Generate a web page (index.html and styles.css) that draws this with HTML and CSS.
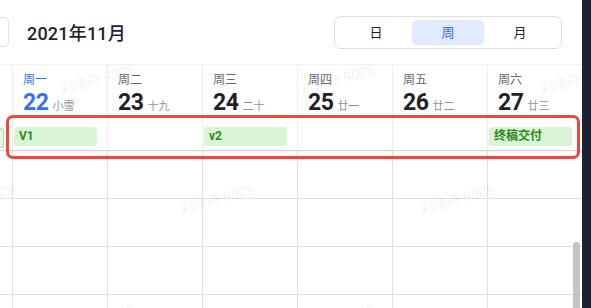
FILE: index.html
```html
<!DOCTYPE html>
<html lang="zh-CN">
<head>
  <meta charset="UTF-8" />
  <meta name="viewport" content="width=device-width, initial-scale=1.0"/>
  <title>日历</title>
  <link rel="stylesheet" href="styles.css">
</head>
<body>

  <div class="app">
    <div class="toolbar">
      <div class="nav-stub"></div>
      <div class="month-title">2021年11月</div>
      <div class="view-switch">
        <div class="view-btn">日</div>
        <div class="view-btn active">周</div>
        <div class="view-btn">月</div>
      </div>
    </div>

    <div class="calendar">
      <div class="head-row" id="head-row"></div>
      <div class="allday-row" id="allday-row"></div>
      <div class="grid-row" id="grid-rows"></div>
    </div>

    <div class="highlight"></div>
    <div class="scrollbar"></div>
    <div class="watermarks" id="watermarks"></div>
  </div>

  <script>
    const days = [
      { name: "周一", date: 22, lunar: "小雪", today: true, event: "V1" },
      { name: "周二", date: 23, lunar: "十九" },
      { name: "周三", date: 24, lunar: "二十", event: "v2" },
      { name: "周四", date: 25, lunar: "廿一" },
      { name: "周五", date: 26, lunar: "廿二" },
      { name: "周六", date: 27, lunar: "廿三", event: "终稿交付" }
    ];

    const headRow = document.getElementById("head-row");
    const alldayRow = document.getElementById("allday-row");
    const gridRows = document.getElementById("grid-rows");

    // partial column from the previous day
    headRow.innerHTML = `<div class="cell cell-edge"></div>`;
    alldayRow.innerHTML = `<div class="cell cell-edge"><div class="chip-stub"></div></div>`;

    days.forEach(d => {
      headRow.innerHTML += `
        <div class="cell head-cell ${d.today ? "today" : ""}">
          <div class="day-name">${d.name}</div>
          <div class="day-date">${d.date}<span class="lunar">${d.lunar}</span></div>
        </div>`;
      alldayRow.innerHTML += `
        <div class="cell allday-cell">
          ${d.event ? `<div class="chip">${d.event}</div>` : ""}
        </div>`;
    });

    let rows = "";
    for (let r = 0; r < 4; r++) {
      rows += `<div class="cell cell-edge slot"></div>`;
      days.forEach(() => rows += `<div class="cell slot"></div>`);
    }
    gridRows.innerHTML = rows;

    // watermark lattice
    const wm = document.getElementById("watermarks");
    const spots = [
      [98, 78], [338, 78], [578, 78],
      [-22, 198], [218, 198], [458, 198],
      [98, 318], [338, 318]
    ];
    spots.forEach(([x, y]) => {
      const s = document.createElement("span");
      s.className = "wm";
      s.textContent = "刘晓舟 9008";
      s.style.left = (x - 40) + "px";
      s.style.top = (y - 10) + "px";
      wm.appendChild(s);
    });
  </script>

</body>
</html>
```

FILE: styles.css
```css
body {
  margin: 0;
  height: 308px;
  overflow: hidden;
  background: #1a2234;
  font-family: Roboto, "Noto Sans CJK SC", sans-serif;
  color: #1f2329;
}

.app {
  position: relative;
  width: 582px;
  height: 308px;
  background: #fff;
  overflow: hidden;
}

.toolbar {
  height: 64px;
  display: flex;
  align-items: center;
}

.nav-stub {
  width: 40px;
  height: 30px;
  margin-left: -31px;
  border: 1px solid #dee0e3;
  border-radius: 6px;
  box-sizing: border-box;
}

.month-title {
  margin-left: 18px;
  font-size: 18px;
  font-weight: 500;
  letter-spacing: 0.2px;
}

.view-switch {
  margin-left: auto;
  margin-right: 20px;
  display: flex;
  padding: 3px 5px;
  border: 1px solid #dee0e3;
  border-radius: 7px;
  margin-top: 1px;
}

.view-btn {
  width: 72px;
  height: 25px;
  line-height: 25px;
  text-align: center;
  font-size: 13px;
  border-radius: 5px;
}

.view-btn.active {
  background: #e1eaff;
  color: #3370ff;
}

.calendar {
  border-top: 1px solid #eff0f1;
}

.head-row,
.allday-row,
.grid-row {
  display: grid;
  grid-template-columns: 12px repeat(6, 95px);
}

.cell {
  border-left: 1px solid #eceded;
  box-sizing: border-box;
}

.cell-edge {
  border-left: none;
}

.head-row {
  height: 55px;
}

.head-cell {
  padding: 5px 0 0 10px;
}

.day-name {
  font-size: 12px;
  line-height: 20px;
  color: #646a73;
}

.day-date {
  font-size: 23px;
  font-weight: 700;
  line-height: 26px;
  letter-spacing: -0.5px;
  color: #1f2329;
}

.lunar {
  font-size: 11px;
  font-weight: 400;
  letter-spacing: 0;
  color: #8f959e;
  margin-left: 4px;
}

.today .day-name,
.today .day-date {
  color: #3370ff;
}

.allday-row {
  height: 30px;
  border-bottom: 1px solid #d3d4d6;
  box-shadow: 0 1px 2px rgba(0, 0, 0, 0.06);
}

.allday-cell {
  padding: 7px 10px 0 1px;
}

.chip {
  height: 19px;
  line-height: 19px;
  padding-left: 5px;
  background: #d9f5d6;
  border-radius: 3px;
  color: #2c8a1c;
  font-size: 12px;
  font-weight: 700;
}

.chip-stub {
  width: 3px;
  height: 18px;
  margin-top: 8px;
  background: #e4f6e1;
  border: 1px solid #a9d8a3;
  border-left: none;
  border-radius: 0 3px 3px 0;
}

.slot {
  height: 48px;
  border-left-color: #dee0e3;
  border-bottom: 1px solid #dee0e3;
}

.slot.cell-edge {
  border-left: none;
}

.highlight {
  position: absolute;
  left: 6px;
  top: 115px;
  width: 574px;
  height: 44px;
  box-sizing: border-box;
  border: 3px solid #f2453d;
  border-radius: 7px;
}

.scrollbar {
  position: absolute;
  left: 573px;
  top: 242px;
  width: 7px;
  height: 90px;
  background: #c4c4c4;
  border-radius: 4px;
}

.watermarks {
  position: absolute;
  inset: 0;
  pointer-events: none;
}

.wm {
  position: absolute;
  width: 80px;
  font-size: 14px;
  white-space: nowrap;
  color: rgba(31, 35, 41, 0.08);
  transform: rotate(-16deg);
  transform-origin: center;
}
```
